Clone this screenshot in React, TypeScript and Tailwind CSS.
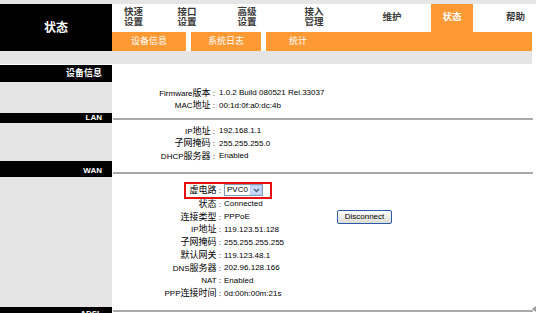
import React from 'react'

const CJK = /([\u3400-\u9fff]+)/

// 中文字形比拉丁字母略大一点
const Mixed = ({ s }: { s: string }) => (
  <>
    {s.split(CJK).map((p, i) =>
      CJK.test(p) ? (
        <span key={i} className="text-[9px]">
          {p}
        </span>
      ) : (
        <span key={i}>{p}</span>
      )
    )}
  </>
)

const navItems = [
  { lines: ['快速', '设置'], w: 'w-[43px]' },
  { lines: ['接口', '设置'], w: 'w-[64px]' },
  { lines: ['高级', '设置'], w: 'w-[56px]' },
  { lines: ['接入', '管理'], w: 'w-[78px]' },
  { lines: ['维护'], w: 'w-[78px]' },
]

type Row = { label: string; value: string }

const deviceRows: Row[] = [
  { label: 'Firmware版本', value: '1.0.2 Build 080521 Rel.33037' },
  { label: 'MAC地址', value: '00:1d:0f:a0:dc:4b' },
]

const lanRows: Row[] = [
  { label: 'IP地址', value: '192.168.1.1' },
  { label: '子网掩码', value: '255.255.255.0' },
  { label: 'DHCP服务器', value: 'Enabled' },
]

const wanRows: Row[] = [
  { label: '状态', value: 'Connected' },
  { label: '连接类型', value: 'PPPoE' },
  { label: 'IP地址', value: '119.123.51.128' },
  { label: '子网掩码', value: '255.255.255.255' },
  { label: '默认网关', value: '119.123.48.1' },
  { label: 'DNS服务器', value: '202.96.128.166' },
  { label: 'NAT', value: 'Enabled' },
  { label: 'PPP连接时间', value: '0d:00h:00m:21s' },
]

const Line = () => <div className="ml-[1px] h-[2px] w-full bg-[#a9a9a9]" />

const InfoRow = ({ row }: { row: Row }) => (
  <div className="flex h-[12.5px] items-center">
    <div className="w-[103px] shrink-0 whitespace-nowrap text-right">
      <Mixed s={row.label} /> :
    </div>
    <div className="whitespace-nowrap pl-[4px]">{row.value}</div>
  </div>
)

const WanRow = ({ row }: { row: Row }) => (
  <div className="flex h-[12.8px] items-center">
    <div className="w-[109px] shrink-0 whitespace-nowrap text-right">
      <Mixed s={row.label} /> :
    </div>
    <div className="w-[116px] shrink-0 whitespace-nowrap pl-[3px]">{row.value}</div>
    {row.label === '连接类型' && (
      <button
        type="button"
        className="flex h-[14px] w-[55px] items-center justify-center rounded-[2px] border border-[#2a5ba8] bg-gradient-to-b from-white to-[#dcdcd4] text-[8px] leading-none text-black"
      >
        Disconnect
      </button>
    )}
  </div>
)

export default function App() {
  return (
    <div
      className="relative h-[313px] w-[536px] overflow-hidden bg-white text-[8px] leading-none text-black"
      style={{ fontFamily: '"Liberation Sans", "Noto Sans CJK SC", sans-serif' }}
    >
      <div className="h-[4px] bg-[#e5e5e5]" />

      <div className="w-[532px]">
        {/* 顶部导航 */}
        <div className="flex h-[47px]">
          <div className="flex w-[112px] shrink-0 items-center justify-center bg-black text-[12px] font-bold text-white">
            状态
          </div>
          <div className="flex flex-1 flex-col">
            <div className="flex h-[28px] text-[9.5px] font-bold text-[#3a3a3a]">
              {navItems.map(item => (
                <div key={item.lines.join('')} className={`${item.w} flex flex-col items-center justify-center pb-[2px] leading-[10px]`}>
                  {item.lines.map(l => (
                    <span key={l}>{l}</span>
                  ))}
                </div>
              ))}
              <div className="flex w-[42px] items-center justify-center bg-[#ff9933] pb-[2px] text-white">状态</div>
              <div className="flex flex-1 items-center pb-[2px] pl-[33px]">帮助</div>
            </div>
            <div className="flex h-[19px] bg-[#ff9933] text-[9px] text-white">
              <div className="flex w-[74px] items-center justify-center">设备信息</div>
              <div className="w-[5px] bg-white" />
              <div className="flex w-[70px] items-center justify-center">系统日志</div>
              <div className="w-[5px] bg-white" />
              <div className="flex w-[64px] items-center justify-center">统计</div>
            </div>
          </div>
        </div>

        <div className="h-[13px] bg-[#e5e5e5]" />

        {/* 设备信息 */}
        <div className="flex h-[18px]">
          <div className="flex w-[112px] shrink-0 items-center justify-end border-t border-white bg-black pr-[10px] text-[9px] font-bold text-white">
            设备信息
          </div>
        </div>
        <div className="flex h-[31px]">
          <div className="w-[112px] shrink-0 bg-[#e5e5e5]" />
          <div className="flex-1 pt-[5px]">
            {deviceRows.map(r => (
              <InfoRow key={r.label} row={r} />
            ))}
          </div>
        </div>

        {/* LAN */}
        <div className="flex h-[10px]">
          <div className="flex w-[112px] shrink-0 items-center justify-end bg-black pr-[10px] text-[8px] font-bold text-white">
            LAN
          </div>
          <div className="flex-1 pt-[5px]">
            <Line />
          </div>
        </div>
        <div className="flex h-[38px]">
          <div className="w-[112px] shrink-0 bg-[#e5e5e5]" />
          <div className="flex-1 pt-[2px]">
            {lanRows.map(r => (
              <InfoRow key={r.label} row={r} />
            ))}
          </div>
        </div>

        {/* WAN */}
        <div className="flex h-[16px]">
          <div className="flex w-[112px] shrink-0 items-end justify-end bg-black pb-[1px] pr-[10px] text-[8px] font-bold leading-[10px] text-white">
            WAN
          </div>
          <div className="flex-1 pt-[11px]">
            <Line />
          </div>
        </div>
        <div className="flex h-[130px]">
          <div className="w-[112px] shrink-0 bg-[#e5e5e5]" />
          <div className="flex-1 pt-[5px]">
            <div className="relative flex h-[16px] items-center">
              <div className="w-[109px] shrink-0 whitespace-nowrap text-right">
                <Mixed s="虚电路" /> :
              </div>
              <div className="pl-[3px]">
                <div className="flex h-[12px] w-[39px] border border-[#7f9db9] bg-white">
                  <span className="flex-1 pl-[2px] leading-[10px]">PVC0</span>
                  <span className="flex w-[12px] items-center justify-center border border-[#b9cdf4] bg-[#c9d8fb]">
                    <svg width="7" height="5" viewBox="0 0 7 5">
                      <path d="M1 1 L3.5 3.5 L6 1" fill="none" stroke="#4d6185" strokeWidth="1.4" />
                    </svg>
                  </span>
                </div>
              </div>
              {/* 红色标注框 */}
              <div className="absolute left-[72px] top-0 h-[17px] w-[88px] border-2 border-[#e81010]" />
            </div>
            {wanRows.map(r => (
              <WanRow key={r.label} row={r} />
            ))}
          </div>
        </div>

        {/* ADSL */}
        <div className="flex h-[16px]">
          <div className="flex w-[112px] shrink-0 items-start justify-end bg-black pr-[10px] pt-[2px] text-[8px] font-bold leading-[10px] text-white">
            ADSL
          </div>
          <div className="flex-1 pt-[3px]">
            <Line />
          </div>
        </div>
      </div>

      <div className="absolute right-0 top-[306px] h-0 w-0 border-y-[3px] border-r-[4px] border-y-transparent border-r-[#9a9a9a]" />
    </div>
  )
}
